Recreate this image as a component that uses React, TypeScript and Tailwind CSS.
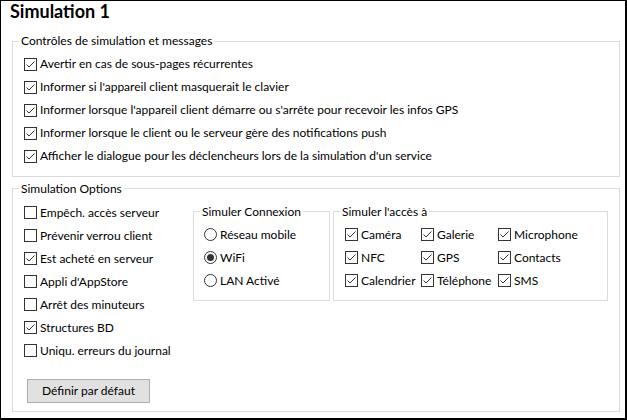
import React from "react";

const FONT = { fontFamily: 'Lato, "Noto Sans", sans-serif' };

function Check({ checked }: { checked: boolean }) {
  return (
    <svg width="13" height="13" viewBox="0 0 13 13" className="shrink-0">
      <rect x="0.5" y="0.5" width="12" height="12" fill="#fff" stroke="#333" />
      {checked && (
        <path d="M2.5 6.5 L5 9 L10.5 3.5" fill="none" stroke="#333" strokeWidth="1" />
      )}
    </svg>
  );
}

function Radio({ checked }: { checked: boolean }) {
  return (
    <svg width="13" height="13" viewBox="0 0 13 13" className="shrink-0">
      <circle cx="6.5" cy="6.5" r="6" fill="#fff" stroke="#333" />
      {checked && <circle cx="6.5" cy="6.5" r="3.5" fill="#333" />}
    </svg>
  );
}

function CheckRow({ label, checked }: { label: string; checked: boolean }) {
  return (
    <div className="flex h-[23px] items-center gap-[3px] whitespace-nowrap">
      <Check checked={checked} />
      <span>{label}</span>
    </div>
  );
}

function Legend({ children }: { children: React.ReactNode }) {
  return <legend className="ml-[6px] px-[2px] leading-[16px]">{children}</legend>;
}

const messages = [
  "Avertir en cas de sous-pages récurrentes",
  "Informer si l'appareil client masquerait le clavier",
  "Informer lorsque l'appareil client démarre ou s'arrête pour recevoir les infos GPS",
  "Informer lorsque le client ou le serveur gère des notifications push",
  "Afficher le dialogue pour les déclencheurs lors de la simulation d'un service",
];

const options: [string, boolean][] = [
  ["Empêch. accès serveur", false],
  ["Prévenir verrou client", false],
  ["Est acheté en serveur", true],
  ["Appli d'AppStore", false],
  ["Arrêt des minuteurs", false],
  ["Structures BD", true],
  ["Uniqu. erreurs du journal", false],
];

const radios: [string, boolean][] = [
  ["Réseau mobile", false],
  ["WiFi", true],
  ["LAN Activé", false],
];

const access = [
  ["Caméra", "Galerie", "Microphone"],
  ["NFC", "GPS", "Contacts"],
  ["Calendrier", "Téléphone", "SMS"],
];

export default function App() {
  return (
    <div
      style={FONT}
      className="box-border h-[420px] w-[627px] overflow-hidden border-t border-l border-r-2 border-b-2 border-black bg-white pl-[11px] text-[12px] text-black"
    >
      <h1 className="-ml-[2px] h-[20px] text-[18px] font-bold leading-[20px]">Simulation 1</h1>

      <fieldset className="mt-[12px] w-[608px] border border-[#dcdcdc] p-0">
        <Legend>Contrôles de simulation et messages</Legend>
        <div className="pt-[3.5px] pb-[8px] pl-[11px]">
          {messages.map((m) => (
            <CheckRow key={m} label={m} checked />
          ))}
        </div>
      </fieldset>

      <fieldset className="mt-[4px] w-[608px] border border-[#dcdcdc] p-0">
        <Legend>Simulation Options</Legend>
        <div className="flex pt-[4.5px] pl-[11px]">
          <div className="w-[169px]">
            {options.map(([l, c]) => (
              <CheckRow key={l} label={l} checked={c} />
            ))}
            <button className="mt-[16.5px] mb-[8px] ml-[3px] h-[24px] w-[123px] border border-[#adadad] bg-[#e1e1e1]">
              Définir par défaut
            </button>
          </div>

          <fieldset className="mt-[2.5px] h-[97px] w-[137px] border border-[#dcdcdc] p-0">
            <Legend>Simuler Connexion</Legend>
            <div className="pt-[3.5px] pl-[10px]">
              {radios.map(([l, c]) => (
                <div key={l} className="flex h-[23px] items-center gap-[3px] whitespace-nowrap">
                  <Radio checked={c} />
                  <span>{l}</span>
                </div>
              ))}
            </div>
          </fieldset>

          <fieldset className="mt-[2.5px] ml-[3px] h-[97px] w-[275px] border border-[#dcdcdc] p-0">
            <Legend>Simuler l'accès à</Legend>
            <div className="grid grid-cols-[76px_77px_1fr] pt-[3.5px] pl-[11px]">
              {access.flat().map((l) => (
                <CheckRow key={l} label={l} checked />
              ))}
            </div>
          </fieldset>
        </div>
      </fieldset>
    </div>
  );
}
